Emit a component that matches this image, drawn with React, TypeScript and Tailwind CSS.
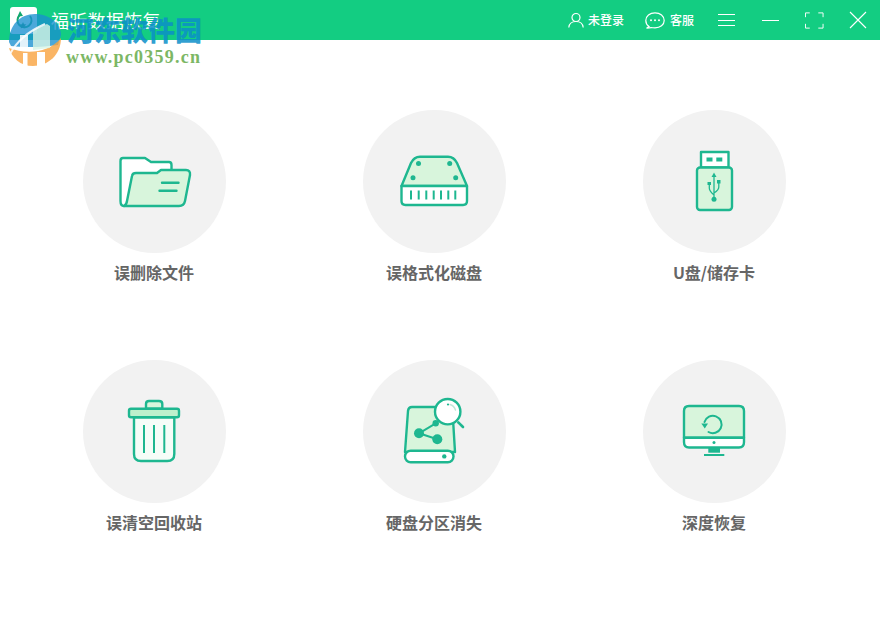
import React from 'react';

const stroke = '#1eb790';
const light = '#d8f5dc';

const FolderIcon = () => (
  <svg viewBox="83 110 143 143" className="w-full h-full" fill="none" stroke={stroke} strokeWidth="2.400" strokeLinejoin="round" strokeLinecap="round">
    <path d="M123 158H145L151 162H169Q171.500 162 171.500 165V172H132L127 202L124 206Q120.500 206 120.500 201V161Q120.500 158 123 158Z" fill="#fff" stroke="none" />
    <path d="M171.500 170V165Q171.500 162 169 162H151L145 158H123Q120.500 158 120.500 161V201Q120.500 206 124 206" />
    <path d="M136 173H157L161 170H186Q190.500 170 190 175L185 201Q184 206 179 206H124Q126.500 205 127 201L132 176Q132.500 173 136 173Z" fill={light} />
    <path d="M162 182.700H178.500M159.500 190.700H176.500" />
  </svg>
);

const DiskIcon = () => (
  <svg viewBox="363 110 143 143" className="w-full h-full" fill="none" stroke={stroke} strokeWidth="2.400" strokeLinecap="round" strokeLinejoin="round">
    <path d="M401.500 186L411 163Q414 156.700 420 156.700H448Q454 156.700 457 163L467 186Z" fill={light} />
    <path d="M401.500 186H467V201Q467 205 463 205H405.500Q401.500 205 401.500 201Z" fill="#fff" />
    <g fill={stroke} stroke="none">
      <circle cx="418.500" cy="163.500" r="2.500" />
      <circle cx="449.700" cy="163.500" r="2.500" />
      <circle cx="413" cy="177.700" r="2.500" />
      <circle cx="455.700" cy="177.700" r="2.500" />
    </g>
    <path d="M411 190.500V199.500M418.700 190.500V199.500M426.300 190.500V199.500M433.700 190.500V199.500M441 190.500V199.500M448.300 190.500V199.500M455.300 190.500V199.500" strokeLinecap="butt" strokeWidth="2" />
  </svg>
);

const UsbIcon = () => (
  <svg viewBox="643 110 143 143" className="w-full h-full" fill="none" stroke={stroke} strokeWidth="2.400" strokeLinejoin="round">
    <rect x="701" y="152" width="27.500" height="15.500" fill="#fff" />
    <rect x="697" y="167.500" width="35" height="42.500" rx="3" fill={light} />
    <g fill={stroke} stroke="none">
      <rect x="706.500" y="157.500" width="6" height="4" />
      <rect x="716.300" y="157.500" width="6" height="4" />
      <path d="M714 172.500L716.500 177H711.500Z" />
      <circle cx="714" cy="199.300" r="2.500" />
      <rect x="707.500" y="182" width="3.500" height="3" />
      <rect x="717" y="180" width="3.500" height="3.500" />
    </g>
    <path d="M714 176V198M709.300 184V188Q709.300 191 714 195M718.800 183V187Q718.800 190 714 193" strokeWidth="1.300" />
  </svg>
);

const TrashIcon = () => (
  <svg viewBox="83 360 143 143" className="w-full h-full" fill="none" stroke={stroke} strokeWidth="2.400" strokeLinejoin="round">
    <path d="M146 408.700V404Q146 401 149 401H159Q162.300 401 162.300 404V408.700Z" fill={light} />
    <path d="M134 417.300H174.300V454Q174.300 461 167.300 461H141Q134 461 134 454Z" fill="#f6fdf8" />
    <rect x="129" y="408.700" width="50" height="8.600" rx="2" fill="#bdf0cc" />
    <path d="M144 425V453M154 425V453M164.300 425V453" strokeWidth="2" />
  </svg>
);

const DriveSearchIcon = () => (
  <svg viewBox="363 360 143 143" className="w-full h-full" fill="none" stroke={stroke} strokeWidth="2.400" strokeLinejoin="round" strokeLinecap="round">
    <path d="M412 407H449Q452 407 452.500 411L455 452H405L408 411Q408.500 407 412 407Z" fill={light} />
    <rect x="405" y="450.700" width="48.500" height="11.500" rx="5.700" fill="#fff" />
    <circle cx="444.300" cy="456.400" r="2.200" fill={stroke} stroke="none" />
    <path d="M419 433.300L435.700 423.300M419 433.300L437.300 439.300" strokeWidth="2" />
    <g fill={stroke} stroke="none">
      <circle cx="419" cy="433.300" r="5" />
      <circle cx="437.300" cy="439.300" r="5" />
      <circle cx="435.700" cy="423.300" r="3.200" />
    </g>
    <circle cx="447.700" cy="411.700" r="12.700" fill="#fff" />
    <path d="M458.300 422.300L463 427" strokeWidth="2.600" />
    <path d="M450 404.500Q454 405.500 455.500 410" stroke="#bfe8d8" strokeWidth="1.500" />
    <circle cx="448" cy="404.500" r="1.100" fill={stroke} stroke="none" />
  </svg>
);

const MonitorIcon = () => (
  <svg viewBox="643 360 143 143" className="w-full h-full" fill="none" stroke={stroke} strokeWidth="2.400" strokeLinejoin="round" strokeLinecap="round">
    <path d="M684 437.700V411Q684 406 689 406H739Q744 406 744 411V437.700Z" fill={light} />
    <path d="M684 437.700H744V442Q744 447.500 739 447.500H689Q684 447.500 684 442Z" fill="#fff" />
    <circle cx="714" cy="442.400" r="1.500" fill={stroke} stroke="none" />
    <rect x="708.300" y="447.700" width="11.700" height="5" fill={stroke} stroke="none" />
    <rect x="704" y="454" width="20.300" height="2" fill={stroke} stroke="none" />
    <path d="M704.500 422A8.700 8.700 0 1 1 708.500 432" strokeWidth="2" />
    <path d="M701.300 423.500H708L704.800 428.500Z" fill={stroke} stroke="none" />
  </svg>
);

const items = [
  { label: '误删除文件', icon: <FolderIcon /> },
  { label: '误格式化磁盘', icon: <DiskIcon /> },
  { label: 'U盘/储存卡', icon: <UsbIcon /> },
  { label: '误清空回收站', icon: <TrashIcon /> },
  { label: '硬盘分区消失', icon: <DriveSearchIcon /> },
  { label: '深度恢复', icon: <MonitorIcon /> },
];

const App = () => {
  return (
    <div className="relative w-[880px] h-[620px] overflow-hidden bg-white font-['Noto_Sans_CJK_SC','Liberation_Sans',sans-serif]">
      {/* Title bar */}
      <header className="flex items-center h-10 bg-[#13cd82] text-white">
        <div className="flex items-center justify-center w-[27px] h-[27px] ml-[10px] rounded-[3px] bg-white">
          <svg viewBox="0 0 27 27" className="w-[27px] h-[27px]" fill="none">
            <path d="M10 8A7 7 0 1 0 20 9" stroke="#13a86f" strokeWidth="2" />
            <path d="M10 4L13 9L7.500 9.500Z" fill="#13a86f" />
            <path d="M13 15L14 17.300L16.500 17.500L14.600 19L15.200 21.500L13 20.200L10.800 21.500L11.400 19L9.500 17.500L12 17.300Z" fill="#1c8f6b" />
          </svg>
        </div>
        <div className="ml-[14px] text-[18px] tracking-[0.3px] leading-none">福昕数据恢复</div>
        <div className="flex items-center ml-auto">
          <svg viewBox="0 0 16 16" className="w-4 h-4 mr-[4px]" fill="none" stroke="#fff" strokeWidth="1.200">
            <circle cx="8" cy="5.500" r="4" />
            <path d="M0.800 15.500C1.200 11.500 4 9.500 8 9.500S14.800 11.500 15.200 15.500" />
          </svg>
          <span className="text-[12px] font-medium">未登录</span>
          <svg viewBox="0 0 20 17" className="w-5 h-[17px] ml-[21px] mr-[5px]" fill="none" stroke="#fff" strokeWidth="1.200">
            <path d="M4 14.500C1.800 13 0.800 11 0.800 8.500C0.800 4 4.800 0.800 10 0.800S19.200 4 19.200 8.500S15.200 15.800 10 15.800C8 15.800 6 15.600 4.300 15.800L1.500 16.200Z" />
            <g fill="#fff" stroke="none">
              <circle cx="6" cy="8.300" r="1" />
              <circle cx="10" cy="8.300" r="1" />
              <circle cx="14" cy="8.300" r="1" />
            </g>
          </svg>
          <span className="text-[12px] font-medium">客服</span>
          <div className="flex flex-col gap-[4.500px] w-[17px] ml-[24px]">
            <div className="h-px bg-white" />
            <div className="h-px bg-white" />
            <div className="h-px bg-white" />
          </div>
          <div className="w-[17px] h-px ml-[27px] bg-white" />
          <svg viewBox="0 0 20 17" className="w-[19px] h-[17px] ml-[26px]" fill="none" stroke="#fff" strokeWidth="1">
            <path d="M0.500 5V0.500H5M14 0.500H19V5M19 12V16.500H14M5 16.500H0.500V12" />
          </svg>
          <svg viewBox="0 0 18 18" className="w-[18px] h-[18px] ml-[25px] mr-[13px]" fill="none" stroke="#fff" strokeWidth="1.100">
            <path d="M1 1L17 17M17 1L1 17" />
          </svg>
        </div>
      </header>

      {/* Recovery modes */}
      <div className="grid grid-cols-3 w-[840px] ml-[14px] pt-[70px]">
        {items.map((item) => (
          <div key={item.label} className="flex flex-col items-center h-[250px]">
            <div className="w-[143px] h-[143px] rounded-full bg-[#f2f2f2] overflow-hidden">{item.icon}</div>
            <div className="mt-[7px] text-[16px] leading-[24px] font-bold text-[#666666]">{item.label}</div>
          </div>
        ))}
      </div>

      {/* Site watermark */}
      <svg viewBox="0 0 70 70" className="absolute left-0 top-0 w-[70px] h-[70px]">
        <path d="M9 42C9 25 20 14 35 14C50 14 61 24 61 35L58 45C45 47 25 48 11 46Z" fill="#1a8fd0" fillOpacity="0.78" />
        <path d="M9 48C25 54 48 54 61 38C61 55 48 66 33 66C20 66 12 58 9 48Z" fill="#f9a33e" fillOpacity="0.8" />
        <rect x="23" y="53" width="4.500" height="14" fill="#fff" />
        <rect x="37" y="52" width="8" height="15" fill="#fff" />
        <path d="M33 50V30L47 24L50 26V48Z" fill="#d8f5e6" fillOpacity="0.8" />
        <rect x="20" y="35" width="8" height="12" fill="#fff" fillOpacity="0.85" />
        <path d="M10 54Q20 35 45 24" fill="none" stroke="#fff" strokeOpacity="0.85" strokeWidth="2" />
      </svg>
      <div className="absolute left-[67px] top-[12px] text-[27px] leading-[36px] font-black text-[#0b8fc9]/85 font-['Noto_Sans_CJK_SC',serif]">河东软件园</div>
      <div className="absolute left-[66px] top-[47px] text-[18px] leading-[20px] font-bold text-[#7cb765] font-['Liberation_Serif',serif] tracking-[1.250px]">www.pc0359.cn</div>
    </div>
  );
};

export default App;
